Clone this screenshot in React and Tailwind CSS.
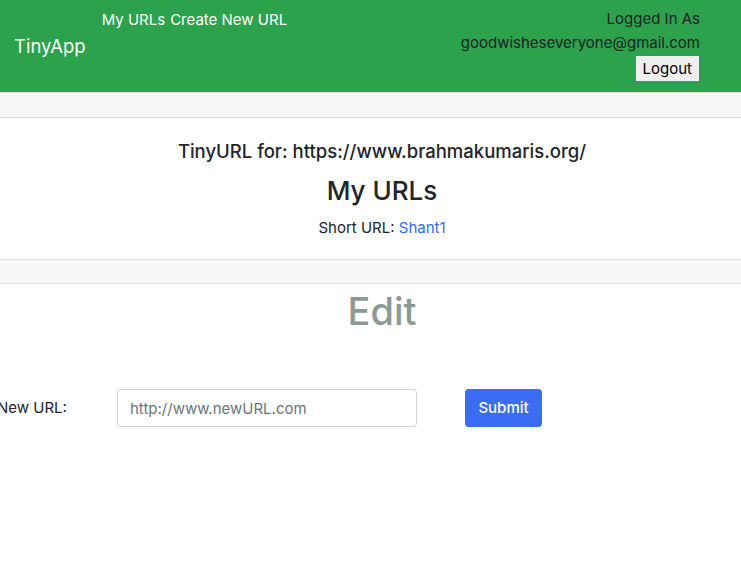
import React from 'react';

const font = { fontFamily: 'Inter, "Liberation Sans", sans-serif' };

const Header = () => (
  <nav className="flex h-[92px] items-start justify-between bg-[#2ba24b] px-[14px]">
    <div className="flex">
      <a href="#" className="mt-[33px] text-[18.5px] text-white">TinyApp</a>
      <div className="ml-[16px] mt-[9px] flex gap-[5px] text-[15px] text-white">
        <a href="#">My URLs</a>
        <a href="#">Create New URL</a>
      </div>
    </div>
    <div className="mr-[27px] mt-[7px] flex flex-col items-end text-[15px] leading-[24px] text-[#1e2125]">
      <span>Logged In As</span>
      <span>goodwisheseveryone@gmail.com</span>
      <button className="h-[27px] border border-[#767676] bg-[#efefef] px-[7px] text-[15px] text-black">
        Logout
      </button>
    </div>
  </nav>
);

const Card = () => (
  <div className="border-y border-[#dcdcdc]">
    <div className="h-[25px] border-b border-[#dcdcdc] bg-[#f7f7f7]" />
    <div className="flex flex-col items-center pl-[23px] pt-[20px] pb-[20px] text-[#212529]">
      <h5 className="text-[18.5px] font-medium leading-[26px]">TinyURL for: https://www.brahmakumaris.org/</h5>
      <h2 className="mt-[11px] text-[26px] font-medium leading-[32px]">My URLs</h2>
      <p className="mt-[10px] text-[15px] leading-[22px]">
        Short URL: <a href="#" className="text-[#2f6ef6]">Shant1</a>
      </p>
    </div>
    <div className="h-[24px] border-t border-[#dcdcdc] bg-[#f7f7f7]" />
  </div>
);

const EditForm = () => (
  <div>
    <h1 className="mt-[2px] pl-[23px] text-center text-[38px] font-medium leading-[50px] text-[#8a9b94]">Edit</h1>
    <form className="ml-[-3px] mt-[53px] flex items-center">
      <label className="w-[120px] text-[15px] text-[#212529]">New URL:</label>
      <input
        type="text"
        placeholder="http://www.newURL.com"
        className="h-[38px] w-[300px] rounded-[4px] border border-[#ced4da] px-[12px] text-[15px] placeholder:text-[#6c757d]"
      />
      <button
        type="submit"
        className="ml-[48px] h-[38px] w-[77px] rounded-[4px] bg-[#3a6cf4] text-[15px] font-medium text-white"
      >
        Submit
      </button>
    </form>
  </div>
);

export default function App() {
  return (
    <div className="min-h-[582px] bg-white" style={font}>
      <Header />
      <Card />
      <EditForm />
    </div>
  );
}
